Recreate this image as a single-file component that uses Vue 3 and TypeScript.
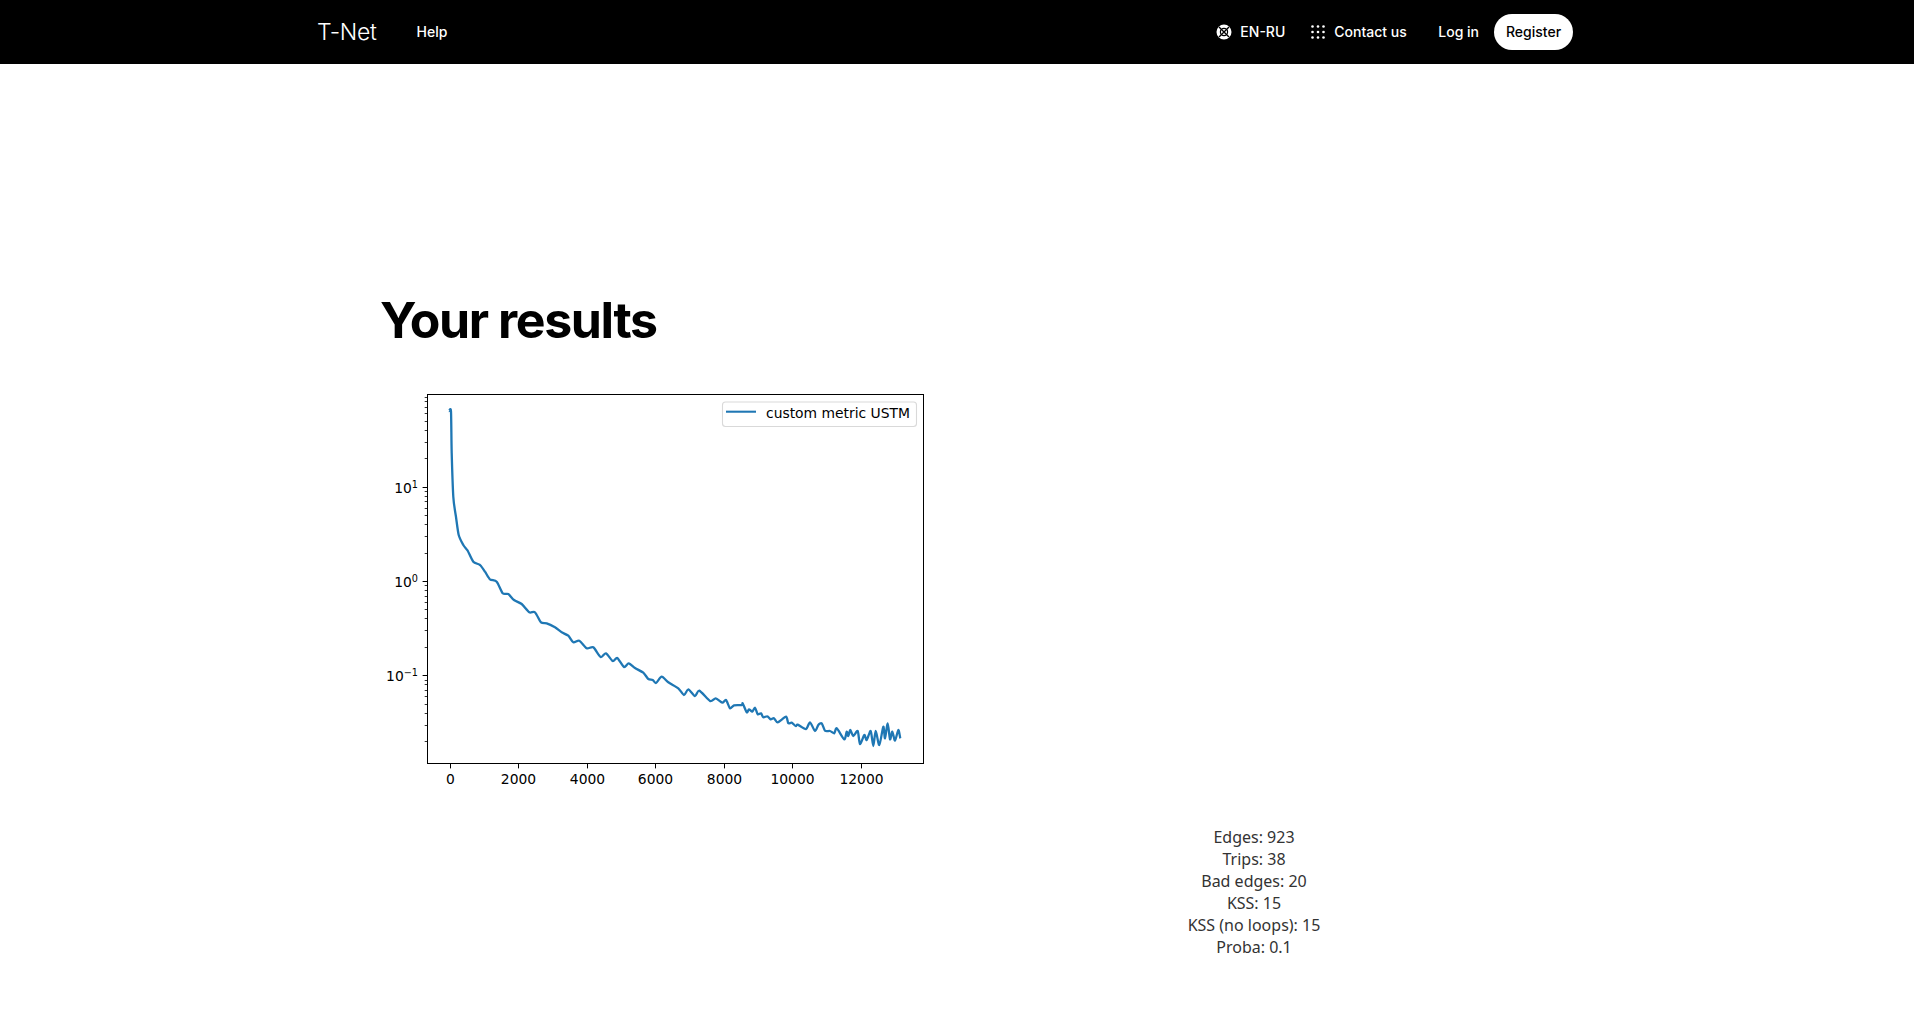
<script setup lang="ts">
const curve: [number, number][] = [
  [449,411],[451,411.5],[451.7,453],[453.3,496.7],[456,517],[458.7,535],[463.3,545],[467.7,550.7],[473.3,561.7],[480,565],[485,571.7],[490,579.3],[496.7,581.7],[502.7,593.3],[508.3,594],[514,600],[521.7,604],[529.3,612.3],[535,612.3],[541,622.3],[546.7,623.3],[555,627.3],[561.7,632.3],[568.3,635.7],[573.3,642.3],[579.3,640.7],[586.7,648.3],[593.3,647.3],[600.7,657],[606,653.3],[612.7,661],[617.3,658],[624,667],[628.7,663.3],[635,668],[643.3,672.7],[648.3,679],[652.7,680],[656,683],[661.7,676.7],[668.3,682.3],[678.3,688.3],[684,695],[688.3,689.3],[695,696],[699.3,690.7],[710,701],[715.7,698.3],[722.3,702.7],[726,700],[730,708.3],[734,705.3],[741.7,705],[742.7,703.3],[746.7,712.3],[749,709.3],[752.3,711.7],[755,707.7],[757.7,714.3],[761,713.3],[763.3,717.3],[767.3,716.3],[770.7,719.3],[774,718.3],[777.7,722.3],[786,716.7],[788.3,723.3],[791.7,722.7],[795.7,726],[797.7,724.7],[806,729],[810,722.3],[815,731],[818.3,725],[821.7,723.3],[825,730.7],[830,731],[834.3,733.3],[836.7,728.3],[844.3,739.3],[846.7,731.7],[848.3,736],[850.3,730],[853.3,736],[857.7,731],[860,744],[864.3,735],[866.7,740],[870.7,731],[873.3,746],[875.7,731],[879.3,745],[883.3,726.7],[885,738.3],[887.7,723.3],[890,739.3],[892.3,731.7],[895,740.7],[898.3,730],[900.3,738.3],
]
const fmt = (n: number) => n.toFixed(1)
const smooth = (pts: [number, number][]) => {
  const k = 1 / 8
  let d = `M${pts[0][0]} ${pts[0][1]}`
  for (let i = 0; i < pts.length - 1; i++) {
    const p0 = pts[Math.max(i - 1, 0)]
    const p1 = pts[i]
    const p2 = pts[i + 1]
    const p3 = pts[Math.min(i + 2, pts.length - 1)]
    const c1 = [p1[0] + (p2[0] - p0[0]) * k, p1[1] + (p2[1] - p0[1]) * k]
    const c2 = [p2[0] - (p3[0] - p1[0]) * k, p2[1] - (p3[1] - p1[1]) * k]
    d += `C${fmt(c1[0])} ${fmt(c1[1])} ${fmt(c2[0])} ${fmt(c2[1])} ${p2[0]} ${p2[1]}`
  }
  return d
}
const curvePath = smooth(curve)

const plot = { left: 427.5, right: 923.5, top: 394.5, bottom: 763.5 }
const xTicks = [0, 2000, 4000, 6000, 8000, 10000, 12000].map((v) => ({
  label: String(v),
  x: Math.round(449.5 + (v / 1000) * 34.29) + 0.5,
}))
const yOf = (v: number) => Math.floor(581.4 - 94.3 * Math.log10(v)) + 0.5
const yMajor = [
  { exp: '1', y: yOf(10) },
  { exp: '0', y: yOf(1) },
  { exp: '−1', y: yOf(0.1) },
]
const minorValues: number[] = []
for (const decade of [0.01, 0.1, 1, 10]) {
  for (let m = 2; m < 10; m++) minorValues.push(m * decade)
}
const yMinor = minorValues.map(yOf).filter((y) => y > plot.top && y < plot.bottom)

const stats = ['Edges: 923', 'Trips: 38', 'Bad edges: 20', 'KSS: 15', 'KSS (no loops): 15', 'Proba: 0.1']
const dots = [0, 1, 2].flatMap((r) => [0, 1, 2].map((c) => ({ cx: 1.5 + c * 5.5, cy: 1.5 + r * 5.5 })))
</script>

<template>
  <div class="page">
    <header class="nav">
      <div class="nav-inner">
        <span class="logo">T-Net</span>
        <a class="link help">Help</a>
        <div class="spacer"></div>
        <a class="link locale">
          <svg width="16" height="16" viewBox="0 0 16 16">
            <circle cx="8" cy="8" r="7.5" fill="#fff" />
            <path d="M3 3 L13 13 M13 3 L3 13" stroke="#000" stroke-width="1.4" />
            <circle cx="8" cy="8" r="3.6" fill="none" stroke="#000" stroke-width="1.2" />
          </svg>
          <span class="label">EN-RU</span>
        </a>
        <a class="link contact">
          <svg width="14" height="14" viewBox="0 0 14 14">
            <circle v-for="(d, i) in dots" :key="i" :cx="d.cx" :cy="d.cy" r="1.3" fill="#fff" />
          </svg>
          <span class="label">Contact us</span>
        </a>
        <a class="link login"><span class="label">Log in</span></a>
        <a class="register"><span class="label">Register</span></a>
      </div>
    </header>

    <main class="main">
      <h1 class="title">Your results</h1>
      <div class="results">
        <svg class="chart" width="640" height="440" viewBox="348 360 640 440">
          <path :d="curvePath" fill="none" stroke="#1f77b4" stroke-width="2.3" stroke-linejoin="round" />
          <rect
            :x="plot.left"
            :y="plot.top"
            :width="plot.right - plot.left"
            :height="plot.bottom - plot.top"
            fill="none"
            stroke="#000"
            stroke-width="1"
          />
          <g v-for="t in xTicks" :key="t.label">
            <line :x1="t.x" :x2="t.x" :y1="plot.bottom" :y2="plot.bottom + 4.9" stroke="#000" stroke-width="1" />
            <text :x="t.x" y="784" text-anchor="middle" class="tick">{{ t.label }}</text>
          </g>
          <line
            v-for="(y, i) in yMinor"
            :key="i"
            :x1="plot.left - 2.8"
            :x2="plot.left"
            :y1="y"
            :y2="y"
            stroke="#000"
            stroke-width="0.8"
          />
          <g v-for="t in yMajor" :key="t.exp">
            <line :x1="plot.left - 4.9" :x2="plot.left" :y1="t.y" :y2="t.y" stroke="#000" stroke-width="1" />
            <text x="418" :y="t.y + 5.5" text-anchor="end" class="tick">10<tspan class="sup" dy="-5.5">{{ t.exp }}</tspan></text>
          </g>
          <rect x="722.5" y="402" width="194" height="24.5" rx="3" fill="#fff" fill-opacity="0.8" stroke="#d9d9d9" stroke-width="1.1" />
          <line x1="726" x2="756" y1="411.7" y2="411.7" stroke="#1f77b4" stroke-width="2.08" />
          <text x="766" y="418" class="tick">custom metric USTM</text>
        </svg>
        <div class="stats">
          <div v-for="s in stats" :key="s">{{ s }}</div>
        </div>
      </div>
    </main>
  </div>
</template>

<style scoped>
.page {
  background: #fff;
  min-height: 1022px;
}
.nav {
  background: #000;
  height: 64px;
  color: #fff;
}
.nav-inner {
  width: 1280px;
  height: 64px;
  margin: 0 auto;
  padding-right: 24px;
  box-sizing: border-box;
  display: flex;
  align-items: center;
  font-family: Inter, "Liberation Sans", sans-serif;
  font-size: 14px;
  font-weight: 500;
}
.logo {
  font-size: 23px;
  font-weight: 300;
  letter-spacing: -0.3px;
  padding-bottom: 1px;
}
.link {
  display: flex;
  align-items: center;
  color: #fff;
}
.label {
  display: block;
  padding-bottom: 2px;
}
.help {
  margin-left: 40px;
  padding-bottom: 2px;
}
.spacer {
  flex: 1;
}
.locale {
  gap: 8px;
}
.contact {
  margin-left: 26px;
  gap: 9px;
}
.login {
  margin-left: 31.5px;
}
.register {
  margin-left: 15px;
  width: 79px;
  height: 36px;
  border-radius: 18px;
  background: #fff;
  color: #000;
  display: flex;
  align-items: center;
  justify-content: center;
}
.main {
  width: 1218px;
  margin: 0 auto;
}
.title {
  margin: 0;
  padding: 224px 0 0 32px;
  height: 72px;
  line-height: 64px;
  font-family: Inter, "Liberation Sans", sans-serif;
  font-size: 50px;
  font-weight: 700;
  letter-spacing: -1.4px;
  color: #000;
}
.results {
  display: grid;
  grid-template-columns: 640px 532px;
  row-gap: 26px;
}
.chart {
  display: block;
  grid-column: 1 / 3;
}
.tick {
  font-family: "DejaVu Sans", sans-serif;
  font-size: 13.89px;
  fill: #000;
}
.sup {
  font-size: 9.7px;
}
.stats {
  grid-column: 2;
  text-align: center;
  font-family: "Noto Sans", sans-serif;
  font-size: 16px;
  line-height: 22px;
  color: #333;
}
</style>
